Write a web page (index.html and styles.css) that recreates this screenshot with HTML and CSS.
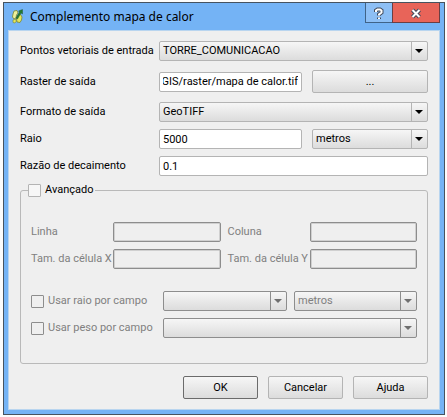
FILE: index.html
```html
<!DOCTYPE html>
<html lang="pt-BR">
<head>
<meta charset="utf-8">
<title>Complemento mapa de calor</title>
<link rel="stylesheet" href="styles.css">
</head>
<body>
<main class="window">
  <header class="titlebar">
    <svg class="logo" viewBox="0 0 13 16" aria-hidden="true">
      <path d="M3 3l3-.5L7 5 5.500 7 5 10 3 11 1.500 9 2 6z" fill="#eef09a" stroke="#7a8630" stroke-width=".8"/>
      <path d="M2 12l2-1 1.500 2L4 15l-2-.5z" fill="#e4e65a" stroke="#7a8630" stroke-width=".6"/>
      <path d="M7 7l2.500-.5L11 9l-.5 3L9 14.500 6 14l-.5-3z" fill="#e6e860" stroke="#7b8730" stroke-width=".8"/>
      <path d="M5 10L8.500 4 7.500 3 11.500 1.500 11.500 6 10 5 6.500 11z" fill="#247c30" stroke="#164d2c" stroke-width=".4"/>
    </svg>
    <h1 class="title">Complemento mapa de calor</h1>
    <div class="controls">
      <button class="control" type="button" aria-label="Ajuda da janela">
        <svg class="glyph" viewBox="0 0 12 14" aria-hidden="true">
          <path class="outline" d="M3 6V4.500L4.500 3.500H7L8.500 4.500V6.500L6 8.500V9.500M6 11.500v1.500"/>
          <path class="core" d="M3 6V4.500L4.500 3.500H7L8.500 4.500V6.500L6 8.500V9.500M6 11.500v1.500"/>
        </svg>
      </button>
      <button class="control close" type="button" aria-label="Fechar">
        <svg class="glyph" viewBox="0 0 12 14" aria-hidden="true">
          <path class="outline" d="M2.500 4l7 7M9.500 4l-7 7"/>
          <path class="core" d="M2.500 4l7 7M9.500 4l-7 7"/>
        </svg>
      </button>
    </div>
  </header>
  <form class="content">
    <div class="row">
      <label for="points">Pontos vetoriais de entrada</label>
      <div class="combo wide"><select id="points"><option>TORRE_COMUNICACAO</option></select></div>
    </div>
    <div class="row output">
      <label for="raster">Raster de saída</label>
      <input class="field" id="raster" type="text" value="QGIS/raster/mapa de calor.tif">
      <button class="button" type="button">...</button>
    </div>
    <div class="row">
      <label for="format">Formato de saída</label>
      <div class="combo wide"><select id="format"><option>GeoTIFF</option></select></div>
    </div>
    <div class="row">
      <label for="radius">Raio</label>
      <input class="field" id="radius" type="text" value="5000">
      <div class="combo"><select aria-label="Unidade do raio"><option>metros</option></select></div>
    </div>
    <div class="row">
      <label for="decay">Razão de decaimento</label>
      <input class="field wide" id="decay" type="text" value="0.1">
    </div>
    <fieldset class="group">
      <legend><label class="check"><input type="checkbox"><span>Avançado</span></label></legend>
      <div class="cells">
        <label for="rows">Linha</label>
        <input class="field" id="rows" type="text" disabled>
        <label for="cols">Coluna</label>
        <input class="field" id="cols" type="text" disabled>
        <label for="cellx">Tam. da célula X</label>
        <input class="field" id="cellx" type="text" disabled>
        <label for="celly">Tam. da célula Y</label>
        <input class="field" id="celly" type="text" disabled>
      </div>
      <div class="options">
        <label class="check"><input type="checkbox" disabled><span>Usar raio por campo</span></label>
        <div class="combo off"><select aria-label="Campo do raio" disabled></select></div>
        <div class="combo off"><select aria-label="Unidade do campo" disabled><option>metros</option></select></div>
        <label class="check"><input type="checkbox" disabled><span>Usar peso por campo</span></label>
        <div class="combo off wide"><select aria-label="Campo do peso" disabled></select></div>
      </div>
    </fieldset>
    <footer class="actions">
      <button class="button default" type="button">OK</button>
      <button class="button" type="button">Cancelar</button>
      <button class="button" type="button">Ajuda</button>
    </footer>
  </form>
</main>
<script src="script.js"></script>
</body>
</html>
```
FILE: styles.css
```css
* {
  box-sizing: border-box;
}

body {
  margin: 0;
  padding: 2px 2px 1px 3px;
  background: #fcfcfc;
  color: #000;
  font: 11px/14px Roboto, "Noto Sans", sans-serif;
}

input,
select,
button {
  margin: 0;
  font: inherit;
  color: inherit;
}

label {
  white-space: nowrap;
}

.window {
  padding: 0 4px 4px;
  border: 1px solid #46535f;
  background: #74b3f5;
}

.titlebar {
  display: flex;
  align-items: flex-start;
  height: 27px;
}

.logo {
  width: 13px;
  height: 16px;
  margin: 5px 6px 0 3px;
}

.title {
  flex: 1;
  margin: 0;
  font: 12px/27px "Noto Sans", "Open Sans", sans-serif;
}

.controls {
  display: flex;
}

.control {
  display: flex;
  align-items: center;
  justify-content: center;
  width: 28px;
  height: 20px;
  padding: 0;
  border: 1px solid #3f6388;
  border-top: 0;
  background: #8dbff5;
}

.close {
  width: 48px;
  margin-left: -1px;
  border-color: #6b3e43;
  background: #e86459;
}

.glyph {
  width: 12px;
  height: 14px;
  fill: none;
}

.outline {
  stroke: #414a5c;
  stroke-width: 4;
}

.core {
  stroke: #fff;
  stroke-width: 2;
}

.content {
  display: flex;
  flex-direction: column;
  gap: 7px;
  padding: 10px 11px;
  border: 1px solid #b9d5ef;
  background: #efefef;
}

.row {
  display: grid;
  grid-template-columns: 129px minmax(0, 1fr) 116px;
  align-items: center;
  column-gap: 10px;
}

.output {
  margin: 2px 0;
}

.wide {
  grid-column: 2 / -1;
}

.field {
  width: 100%;
  min-width: 0;
  height: 20px;
  padding: 0 3px;
  border: 1px solid #b4b4b4;
  border-radius: 2px;
  background: #fff;
}

.field:disabled {
  border-color: #8d8d8d;
  background: #efefef;
  box-shadow: inset 0 0 0 1px #d0d0d0;
}

.combo {
  display: grid;
  grid-template-columns: minmax(0, 1fr) 16px;
  align-items: center;
  height: 20px;
  border: 1px solid #b4b4b4;
  border-radius: 2px;
  background: linear-gradient(#f6f6f6, #dcdcdc);
}

.combo select {
  grid-area: 1 / 1 / 2 / 3;
  width: 100%;
  height: 18px;
  padding: 0 3px;
  border: 0;
  appearance: none;
  background: none;
}

.combo::before {
  content: "";
  grid-area: 1 / 2;
  height: 18px;
  border-left: 1px solid #b4b4b4;
}

.combo::after {
  content: "";
  grid-area: 1 / 2;
  justify-self: center;
  width: 8px;
  height: 4px;
  background: #000;
  clip-path: polygon(0 0, 100% 0, 50% 100%);
  pointer-events: none;
}

.off,
.off::before {
  border-color: #8d8d8d;
}

.off::after {
  background: #6f6f6f;
}

.off select {
  color: #808080;
  opacity: 1;
}

.button {
  height: 23px;
  padding: 0;
  border: 1px solid #b4b4b4;
  border-radius: 2px;
  background: linear-gradient(#f6f6f6, #dcdcdc);
}

.default {
  border-color: #6b6b6b;
}

.group {
  min-width: 0;
  margin: 0;
  padding: 25px 10px;
  border: 1px solid #b9b9b9;
  border-radius: 3px;
  color: #808080;
}

.group legend {
  margin-left: -3px;
  padding: 0 2px 0 0;
  color: #000;
}

.check {
  display: flex;
  align-items: center;
  gap: 4px;
}

.check input {
  flex: none;
  width: 13px;
  height: 13px;
  border: 1px solid #b4b4b4;
  border-radius: 1px;
  appearance: none;
  background: #f7f7f7;
}

.check input:disabled {
  border-color: #8d8d8d;
  background: #efefef;
}

.cells {
  display: grid;
  grid-template-columns: 75px minmax(0, 1fr) 75px minmax(0, 1fr);
  align-items: center;
  gap: 7px;
}

.options {
  display: grid;
  grid-template-columns: 125px minmax(0, 1fr) 123px;
  align-items: center;
  gap: 7px;
  margin-top: 22px;
}

.actions {
  display: grid;
  grid-template-columns: repeat(3, 75px);
  justify-content: end;
  gap: 10px;
  margin-top: 5px;
}
```
FILE: script.js
```js
// Long output paths show their file name rather than their first folders.
const raster = document.getElementById("raster");
raster.scrollLeft = raster.scrollWidth;
```
